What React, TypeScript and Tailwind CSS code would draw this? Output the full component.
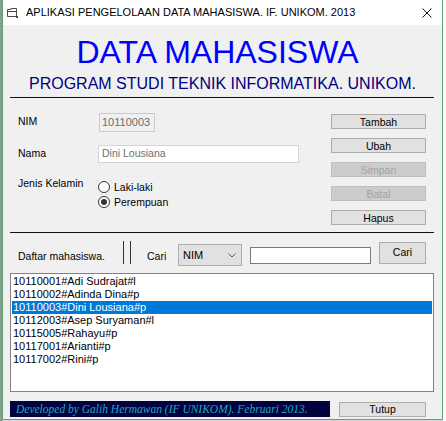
import React from "react";

const rows = [
  "10110001#Adi Sudrajat#l",
  "10110002#Adinda Dina#p",
  "10110003#Dini Lousiana#p",
  "10112003#Asep Suryaman#l",
  "10115005#Rahayu#p",
  "10117001#Arianti#p",
  "10117002#Rini#p",
];

function Btn({ label, disabled }: { label: string; disabled?: boolean }) {
  return (
    <div
      className={
        "w-[95px] h-[15px] border flex items-center justify-center text-[10.5px] leading-[12px] " +
        (disabled
          ? "bg-[#cccccc] border-[#bfbfbf] text-[#a3a3a3]"
          : "bg-[#e1e1e1] border-[#adadad] text-black")
      }
    >
      {label}
    </div>
  );
}

function Radio({ label, checked }: { label: string; checked?: boolean }) {
  return (
    <div className="h-[15px] flex items-center">
      <div className="w-[12px] h-[12px] rounded-full border border-[#333333] bg-white flex items-center justify-center">
        {checked && <div className="w-[6px] h-[6px] rounded-full bg-[#333333]" />}
      </div>
      <span className="ml-[4px] text-[10.5px] leading-[12px]">{label}</span>
    </div>
  );
}

export default function App() {
  return (
    <div
      className="w-[446px] h-[421px] overflow-hidden bg-[#d6d6d6] flex text-black"
      style={{ fontFamily: '"Liberation Sans", Arial, sans-serif' }}
    >
      <div className="w-[2px] h-full bg-[#8d9a90]" />
      <div className="w-[441px] h-[420px] border-x border-b border-[#5aa574] bg-[#f0f0f0] flex flex-col">
        {/* title bar */}
        <div className="h-[25px] bg-white flex items-center">
          <svg className="ml-[4px]" width="11" height="10" viewBox="0 0 11 10">
            <path d="M0.5 1.5 H4 V0.5 H9.5 V8.5 H0.5 Z" fill="none" stroke="#4a4a4a" />
            <path d="M0.5 3.5 H9.5" stroke="#4a4a4a" />
            <rect x="9" y="8" width="2" height="2" fill="#4a4a4a" />
          </svg>
          <span className="ml-[8px] text-[11px] leading-[13px]">
            APLIKASI PENGELOLAAN DATA MAHASISWA. IF. UNIKOM. 2013
          </span>
          <svg className="ml-auto mr-[10px]" width="10" height="10" viewBox="0 0 10 10">
            <path d="M0.5 0.5 L9.5 9.5 M9.5 0.5 L0.5 9.5" stroke="#111" strokeWidth="1" />
          </svg>
        </div>

        {/* header */}
        <div className="pt-[11px] pr-[10px] text-center text-[32px] leading-[32px] text-[#0000ff]">
          DATA MAHASISWA
        </div>
        <div className="mt-[7.5px] text-center text-[16px] leading-[16px] text-[#000080]">
          PROGRAM STUDI TEKNIK INFORMATIKA. UNIKOM.
        </div>
        <div className="mt-[5.5px] ml-[7px] w-[424px] h-[1px] bg-[#111111]" />

        {/* form */}
        <div className="h-[134px] flex">
          <div className="pl-[15px] pt-[15px] flex flex-col">
            <div className="flex h-[19px]">
              <div className="w-[81px] pt-[2px] text-[10.5px] leading-[12px]">NIM</div>
              <div className="w-[56px] h-[19px] border border-[#cccccc] bg-[#f0f0f0] text-[11px] text-[#6d6d6d] pl-[2px] flex items-center">
                10110003
              </div>
            </div>
            <div className="flex h-[18px] mt-[13px]">
              <div className="w-[80px] pt-[2px] text-[10.5px] leading-[12px]">Nama</div>
              <div className="w-[201px] h-[18px] border border-[#d5d5d5] bg-white text-[10.5px] text-[#6d6d6d] pl-[3px] flex items-center">
                Dini Lousiana
              </div>
            </div>
            <div className="flex mt-[14px]">
              <div className="w-[80px] text-[10.5px] leading-[12px]">Jenis Kelamin</div>
              <div className="pt-[2.5px] flex flex-col">
                <Radio label="Laki-laki" />
                <Radio label="Perempuan" checked />
              </div>
            </div>
          </div>
          <div className="ml-auto mr-[16px] pt-[16px] flex flex-col gap-[9px]">
            <Btn label="Tambah" />
            <Btn label="Ubah" />
            <Btn label="Simpan" disabled />
            <Btn label="Batal" disabled />
            <Btn label="Hapus" />
          </div>
        </div>
        <div className="ml-[7px] w-[424px] h-[1px] bg-[#111111]" />

        {/* search bar */}
        <div className="h-[40px] flex items-start">
          <div className="ml-[15px] mt-[17px] w-[105px] text-[10.5px] leading-[12px]">Daftar mahasiswa.</div>
          <div className="mt-[8px] w-[1px] h-[23px] bg-[#333333]" />
          <div className="ml-[6px] mt-[8px] w-[1px] h-[23px] bg-[#333333]" />
          <div className="ml-[16px] mt-[17px] w-[31px] text-[10.5px] leading-[12px]">Cari</div>
          <div className="mt-[11px] w-[64px] h-[22px] border border-[#adadad] bg-[#e1e1e1] flex items-center pl-[4px] text-[11px]">
            NIM
            <svg className="ml-auto mr-[5px]" width="8" height="5" viewBox="0 0 8 5">
              <path d="M0.5 0.5 L4 4 L7.5 0.5" fill="none" stroke="#555" />
            </svg>
          </div>
          <div className="ml-[8px] mt-[14px] w-[121px] h-[17px] border border-[#7a7a7a] bg-white" />
          <div className="ml-[8px] mt-[9px] w-[47px] h-[22px] border border-[#adadad] bg-[#e1e1e1] flex items-center justify-center text-[10.5px]">
            Cari
          </div>
        </div>

        {/* list */}
        <div className="ml-[7px] w-[424px] h-[119px] bg-white border border-[#828282] pt-[1px] px-[1px]">
          {rows.map((r, i) => (
            <div
              key={r}
              className={
                "h-[13px] leading-[13px] text-[11px] pl-[1px] " +
                (i === 2 ? "bg-[#0078d7] text-white" : "text-black")
              }
            >
              {r}
            </div>
          ))}
        </div>

        {/* footer */}
        <div className="mt-[9px] flex items-start">
          <div
            className="ml-[7px] w-[320px] h-[16px] bg-[#02023f] text-[#1fa7c9] italic text-[11.5px] leading-[16px] pl-[6px] whitespace-nowrap"
            style={{ fontFamily: '"Liberation Serif", serif' }}
          >
            Developed by Galih Hermawan (IF UNIKOM). Februari 2013.
          </div>
          <div className="ml-[9px] mt-[1px] w-[87px] h-[15px] border border-[#adadad] bg-[#e1e1e1] flex items-center justify-center text-[10.5px]">
            Tutup
          </div>
        </div>
      </div>
      <div className="flex-1 h-full bg-white" />
    </div>
  );
}
